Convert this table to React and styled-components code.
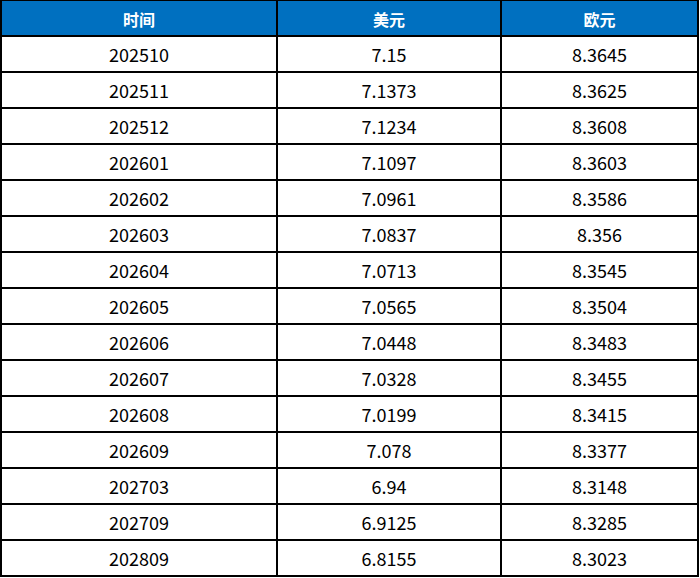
import React from "react";
import styled, { createGlobalStyle } from "styled-components";

const Global = createGlobalStyle`
  html, body { margin: 0; padding: 0; background: #ffffff; }
  body { font-family: "Noto Sans CJK SC", "Noto Sans", sans-serif; }
`;

const Grid = styled.div`
  display: grid;
  grid-template-columns: 274px 222px 195px;
  grid-auto-rows: 34px;
  gap: 2px;
  padding: 1px 2px 2px 2px;
  width: max-content;
  background: #000000;
`;

const HeadCell = styled.div`
  background: #0070c0;
  color: #ffffff;
  font-weight: 700;
  font-size: 16px;
  display: flex;
  align-items: center;
  justify-content: center;
  padding-top: 1px;
`;

const Cell = styled.div`
  background: #ffffff;
  color: #000000;
  font-size: 18px;
  display: flex;
  align-items: center;
  justify-content: center;
`;

const rows = [
  ["202510", "7.15", "8.3645"],
  ["202511", "7.1373", "8.3625"],
  ["202512", "7.1234", "8.3608"],
  ["202601", "7.1097", "8.3603"],
  ["202602", "7.0961", "8.3586"],
  ["202603", "7.0837", "8.356"],
  ["202604", "7.0713", "8.3545"],
  ["202605", "7.0565", "8.3504"],
  ["202606", "7.0448", "8.3483"],
  ["202607", "7.0328", "8.3455"],
  ["202608", "7.0199", "8.3415"],
  ["202609", "7.078", "8.3377"],
  ["202703", "6.94", "8.3148"],
  ["202709", "6.9125", "8.3285"],
  ["202809", "6.8155", "8.3023"],
];

export default function App() {
  return (
    <>
      <Global />
      <Grid>
        <HeadCell>时间</HeadCell>
        <HeadCell>美元</HeadCell>
        <HeadCell>欧元</HeadCell>
        {rows.map((r) =>
          r.map((v, i) => <Cell key={r[0] + "-" + i}>{v}</Cell>)
        )}
      </Grid>
    </>
  );
}
